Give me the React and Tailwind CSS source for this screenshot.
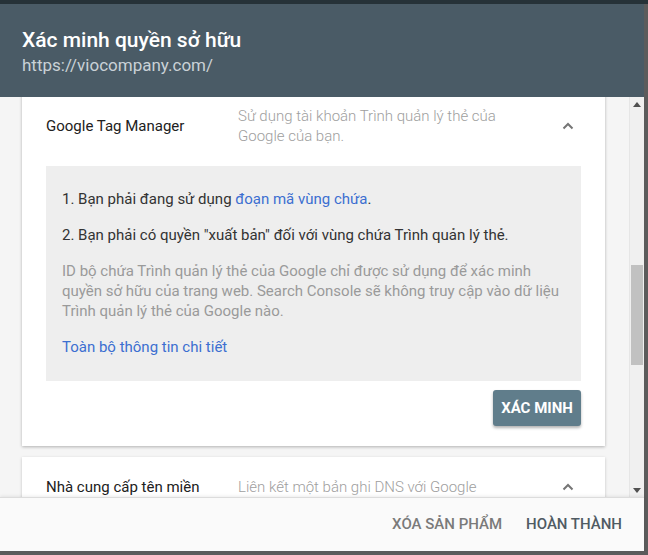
import React from "react";

function ChevronUp() {
  return (
    <svg width="14" height="14" viewBox="0 0 14 14" fill="none">
      <path d="M2.5 9.5 L7 5 L11.5 9.5" stroke="#757575" strokeWidth="2" />
    </svg>
  );
}

function Tri({ up }) {
  return (
    <svg width="8" height="5" viewBox="0 0 8 5">
      {up ? <path d="M0 5 L4 0 L8 5 Z" fill="#505050" /> : <path d="M0 0 L8 0 L4 5 Z" fill="#505050" />}
    </svg>
  );
}

export default function App() {
  return (
    <div
      className="w-[648px] h-[555px] flex flex-col bg-[#5c5c5c] overflow-hidden"
      style={{ fontFamily: "Roboto, 'Noto Sans', sans-serif" }}
    >
      <div className="h-[4px] bg-[#263238] shrink-0" />
      <div className="flex-1 flex min-h-0">
        <div className="w-[644px] flex flex-col min-h-0">
          {/* Header */}
          <div className="h-[93px] shrink-0 bg-[#4a5b66] pl-[22px] pt-[23px]">
            <div className="text-[21px] leading-[26px] font-medium text-white">Xác minh quyền sở hữu</div>
            <div className="text-[17px] leading-[22px] text-[#c9d1d6] mt-[1px]">https://viocompany.com/</div>
          </div>

          {/* Content */}
          <div className="h-[400px] shrink-0 flex bg-[#f5f5f5]">
            <div className="flex-1 overflow-hidden">
              <div className="-mt-[11px] ml-[22px] mr-[24px]">
                {/* Card 1 */}
                <div className="bg-white shadow-[0_1px_3px_rgba(0,0,0,0.28)] px-6 pb-5">
                  <div className="flex items-center py-5">
                    <div className="w-[192px] text-[15px] leading-[20px] text-[#212121]">Google Tag Manager</div>
                    <div className="w-[280px] text-[15px] leading-[20px] text-[#9e9e9e] font-light">
                      Sử dụng tài khoản Trình quản lý thẻ của Google của bạn.
                    </div>
                    <div className="flex-1 flex justify-end pr-[6px]">
                      <ChevronUp />
                    </div>
                  </div>
                  <div className="bg-[#eeeeee] px-4 pt-[23px] pb-6 flex flex-col gap-4 text-[15px] leading-[20px]">
                    <div className="text-[#333333]">
                      1. Bạn phải đang sử dụng <span className="text-[#3c6fd1]">đoạn mã vùng chứa</span>.
                    </div>
                    <div className="text-[#333333]">
                      2. Bạn phải có quyền "xuất bản" đối với vùng chứa Trình quản lý thẻ.
                    </div>
                    <div className="text-[#9a9a9a]">
                      ID bộ chứa Trình quản lý thẻ của Google chỉ được sử dụng để xác minh quyền sở hữu của trang web. Search Console sẽ không truy cập vào dữ liệu Trình quản lý thẻ của Google nào.
                    </div>
                    <div className="text-[#3c6fd1]">Toàn bộ thông tin chi tiết</div>
                  </div>
                  <div className="flex justify-end mt-[9px]">
                    <div className="w-[88px] h-[36px] rounded-[3px] bg-[#607d8b] shadow-[0_2px_3px_rgba(0,0,0,0.3)] flex items-center justify-center text-white text-[15px] font-bold">
                      XÁC MINH
                    </div>
                  </div>
                </div>

                {/* Card 2 */}
                <div className="bg-white shadow-[0_1px_3px_rgba(0,0,0,0.2)] px-6 mt-[11px]">
                  <div className="flex items-center py-5">
                    <div className="w-[192px] text-[15px] leading-[20px] text-[#212121]">Nhà cung cấp tên miền</div>
                    <div className="w-[280px] text-[15px] leading-[20px] text-[#9e9e9e] font-light">
                      Liên kết một bản ghi DNS với Google
                    </div>
                    <div className="flex-1 flex justify-end pr-[6px]">
                      <ChevronUp />
                    </div>
                  </div>
                </div>
              </div>
            </div>
            {/* Scrollbar */}
            <div className="w-[15px] bg-[#f0f0f0] border-l border-[#e6e6e6] flex flex-col items-center">
              <div className="h-[14px] flex items-center justify-center">
                <Tri up />
              </div>
              <div className="flex-1 w-full px-[1px]">
                <div className="mt-[154px] h-[100px] bg-[#c1c1c1]" />
              </div>
              <div className="h-[14px] flex items-center justify-center">
                <Tri />
              </div>
            </div>
          </div>

          {/* Footer */}
          <div className="h-[54px] shrink-0 bg-[#fafafa] border-t border-[#dcdcdc] shadow-[0_-1px_3px_rgba(0,0,0,0.08)] flex items-center justify-end pr-[22px] gap-6 text-[15px] font-medium">
            <div className="text-[#7a7a7a]">XÓA SẢN PHẨM</div>
            <div className="text-[#4f5b63]">HOÀN THÀNH</div>
          </div>
        </div>
      </div>
    </div>
  );
}
